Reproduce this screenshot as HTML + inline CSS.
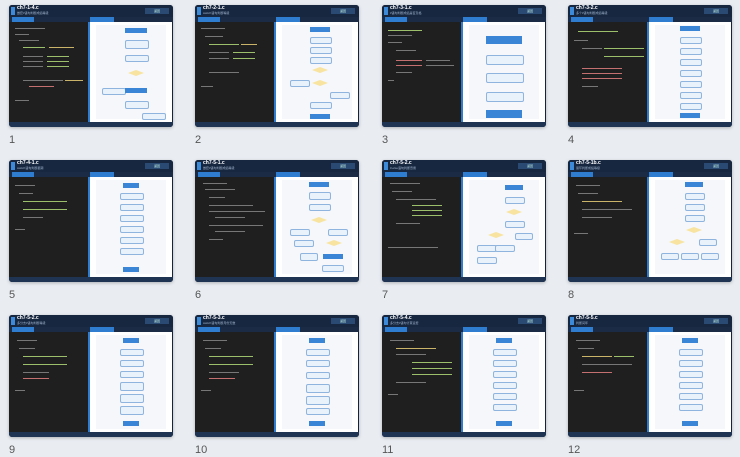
<!DOCTYPE html>
<html><head><meta charset="utf-8"><style>
body{margin:0;width:740px;height:457px;background:#e9edf2;font-family:"Liberation Sans","Noto Sans CJK SC",sans-serif;overflow:hidden;position:relative}
.t{position:absolute;width:164px;height:122px;background:#16233a;border-radius:3px;overflow:hidden;box-shadow:0 1px 3px rgba(0,0,0,.25)}
.n{position:absolute;font-size:11px;color:#555}
.hd{position:absolute;left:0;top:0;width:164px;height:12px;background:#172740}
.ic{position:absolute;left:2px;top:2px;width:4px;height:8px;background:#3c8ad8}
.ti{position:absolute;left:8px;top:1px;font-size:5px;color:#fff;font-weight:bold;line-height:5px}
.su{position:absolute;left:8px;top:7px;font-size:3px;color:#9fb3cc;line-height:3px}
.bt{position:absolute;right:4px;top:3px;width:24px;height:6px;background:#2b4a73;font-size:3px;color:#cfe;text-align:center;line-height:6px}
.tb{position:absolute;left:0;top:12px;width:164px;height:5px;background:#1b2b45}
.lt{position:absolute;left:3px;top:12px;width:22px;height:5px;background:#2f7dd0}
.rt{position:absolute;left:81px;top:12px;width:24px;height:5px;background:#2f7dd0}
.cd{position:absolute;left:0;top:17px;width:79px;height:100px;background:#1f1f1f}
.rp{position:absolute;left:79px;top:17px;width:84px;height:100px;background:#2f7dd0}
.wp{position:absolute;left:2px;top:0;width:82px;height:100px;background:#fff}
.in{position:absolute;left:6px;top:3px;width:70px;height:94px;background:#f5f7fa}
.ft{position:absolute;left:0;top:117px;width:164px;height:5px;background:#1f3352}
.l{position:absolute;height:1px;background:#777}
.g{background:#9bbf6a}.y{background:#c9b46a}.r{background:#c57070}.b{background:#6a9ad0}
.bx{position:absolute;height:5px;border-radius:2px;background:#e9f1fb;border:.5px solid #8fb4dd}
.bb{position:absolute;height:5px;background:#3a85d5}
.dm{position:absolute;width:16px;height:6px;background:#f8e4a0;transform:rotate(0deg);clip-path:polygon(50% 0,100% 50%,50% 100%,0 50%)}
.ln{position:absolute;width:.6px;background:#8aa}
</style></head><body>

<!-- template repeated -->
<div class="t" style="left:9px;top:5px"><div class="hd"><div class="ic"></div><div class="ti">ch7-1-4.c</div><div class="su">嵌套if语句判断成绩等级</div><div class="bt">返回</div></div><div class="tb"></div><div class="lt"></div><div class="rt"></div>
<div class="cd"><div class="l" style="left:6px;top:6px;width:30px"></div><div class="l" style="left:6px;top:12px;width:14px"></div><div class="l" style="left:10px;top:18px;width:20px"></div><div class="l g" style="left:14px;top:25px;width:22px"></div><div class="l y" style="left:40px;top:25px;width:25px"></div><div class="l" style="left:14px;top:34px;width:20px"></div><div class="l g" style="left:38px;top:34px;width:22px"></div><div class="l" style="left:14px;top:39px;width:20px"></div><div class="l g" style="left:38px;top:39px;width:22px"></div><div class="l" style="left:14px;top:44px;width:20px"></div><div class="l g" style="left:38px;top:44px;width:22px"></div><div class="l" style="left:14px;top:58px;width:40px"></div><div class="l y" style="left:56px;top:58px;width:18px"></div><div class="l r" style="left:20px;top:64px;width:25px"></div><div class="l" style="left:6px;top:78px;width:14px"></div></div>
<div class="rp"><div class="wp"><div class="in"></div><div class="bb" style="left:35px;top:6px;width:22px"></div><div class="bx" style="left:35px;top:18px;width:22px;height:7px"></div><div class="bx" style="left:35px;top:33px;width:22px"></div><div class="dm" style="left:38px;top:48px"></div><div class="bx" style="left:12px;top:66px;width:22px"></div><div class="bb" style="left:35px;top:66px;width:22px"></div><div class="bx" style="left:35px;top:79px;width:22px;height:6px"></div><div class="bx" style="left:52px;top:91px;width:22px"></div></div></div><div class="ft"></div></div>
<div class="n" style="left:9px;top:134px">1</div>

<div class="t" style="left:195px;top:5px"><div class="hd"><div class="ic"></div><div class="ti">ch7-2-1.c</div><div class="su">switch语句判断等级</div><div class="bt">返回</div></div><div class="tb"></div><div class="lt"></div><div class="rt"></div>
<div class="cd"><div class="l" style="left:6px;top:6px;width:24px"></div><div class="l" style="left:10px;top:14px;width:18px"></div><div class="l g" style="left:14px;top:22px;width:30px"></div><div class="l y" style="left:46px;top:22px;width:16px"></div><div class="l" style="left:14px;top:30px;width:20px"></div><div class="l g" style="left:38px;top:30px;width:22px"></div><div class="l" style="left:14px;top:36px;width:20px"></div><div class="l g" style="left:38px;top:36px;width:22px"></div><div class="l" style="left:14px;top:50px;width:30px"></div><div class="l" style="left:6px;top:64px;width:12px"></div></div>
<div class="rp"><div class="wp"><div class="in"></div><div class="bb" style="left:34px;top:5px;width:20px"></div><div class="bx" style="left:34px;top:15px;width:20px"></div><div class="bx" style="left:34px;top:25px;width:20px"></div><div class="bx" style="left:34px;top:35px;width:20px"></div><div class="dm" style="left:36px;top:45px"></div><div class="bx" style="left:14px;top:58px;width:18px"></div><div class="dm" style="left:36px;top:58px"></div><div class="bx" style="left:54px;top:70px;width:18px"></div><div class="bx" style="left:34px;top:80px;width:20px"></div><div class="bb" style="left:34px;top:92px;width:20px"></div></div></div><div class="ft"></div></div>
<div class="n" style="left:195px;top:134px">2</div>

<div class="t" style="left:382px;top:5px"><div class="hd"><div class="ic"></div><div class="ti">ch7-3-1.c</div><div class="su">if语句判断成绩是否及格</div><div class="bt">返回</div></div><div class="tb"></div><div class="lt"></div><div class="rt"></div>
<div class="cd"><div class="l g" style="left:6px;top:8px;width:34px"></div><div class="l" style="left:6px;top:13px;width:24px"></div><div class="l" style="left:6px;top:20px;width:14px"></div><div class="l" style="left:14px;top:28px;width:20px"></div><div class="l r" style="left:14px;top:38px;width:26px"></div><div class="l" style="left:44px;top:38px;width:24px"></div><div class="l r" style="left:14px;top:43px;width:26px"></div><div class="l" style="left:44px;top:43px;width:28px"></div><div class="l" style="left:14px;top:50px;width:16px"></div><div class="l" style="left:6px;top:58px;width:6px"></div></div>
<div class="rp"><div class="wp"><div class="in"></div><div class="bb" style="left:23px;top:14px;width:36px;height:8px"></div><div class="bx" style="left:23px;top:33px;width:36px;height:8px"></div><div class="bx" style="left:23px;top:51px;width:36px;height:8px"></div><div class="bx" style="left:23px;top:70px;width:36px;height:8px"></div><div class="bb" style="left:23px;top:88px;width:36px;height:8px"></div></div></div><div class="ft"></div></div>
<div class="n" style="left:382px;top:134px">3</div>

<div class="t" style="left:568px;top:5px"><div class="hd"><div class="ic"></div><div class="ti">ch7-3-2.c</div><div class="su">多个if语句判断成绩等级</div><div class="bt">返回</div></div><div class="tb"></div><div class="lt"></div><div class="rt"></div>
<div class="cd"><div class="l g" style="left:10px;top:9px;width:40px"></div><div class="l" style="left:6px;top:18px;width:14px"></div><div class="l" style="left:14px;top:26px;width:20px"></div><div class="l g" style="left:36px;top:26px;width:40px"></div><div class="l g" style="left:36px;top:34px;width:40px"></div><div class="l r" style="left:14px;top:46px;width:40px"></div><div class="l r" style="left:14px;top:51px;width:40px"></div><div class="l r" style="left:14px;top:56px;width:40px"></div><div class="l" style="left:14px;top:64px;width:16px"></div></div>
<div class="rp"><div class="wp"><div class="in"></div><div class="bb" style="left:31px;top:4px;width:20px"></div><div class="bx" style="left:31px;top:15px;width:20px"></div><div class="bx" style="left:31px;top:26px;width:20px"></div><div class="bx" style="left:31px;top:37px;width:20px"></div><div class="bx" style="left:31px;top:48px;width:20px"></div><div class="bx" style="left:31px;top:59px;width:20px"></div><div class="bx" style="left:31px;top:70px;width:20px"></div><div class="bx" style="left:31px;top:81px;width:20px"></div><div class="bb" style="left:31px;top:91px;width:20px"></div></div></div><div class="ft"></div></div>
<div class="n" style="left:568px;top:134px">4</div>

<div class="t" style="left:9px;top:160px"><div class="hd"><div class="ic"></div><div class="ti">ch7-4-1.c</div><div class="su">switch语句判断星期</div><div class="bt">返回</div></div><div class="tb"></div><div class="lt"></div><div class="rt"></div>
<div class="cd"><div class="l" style="left:6px;top:8px;width:20px"></div><div class="l" style="left:10px;top:16px;width:14px"></div><div class="l g" style="left:14px;top:24px;width:44px"></div><div class="l g" style="left:14px;top:32px;width:44px"></div><div class="l" style="left:14px;top:40px;width:20px"></div><div class="l" style="left:6px;top:52px;width:10px"></div></div>
<div class="rp"><div class="wp"><div class="in"></div><div class="bb" style="left:33px;top:6px;width:16px"></div><div class="bx" style="left:30px;top:16px;width:22px"></div><div class="bx" style="left:30px;top:27px;width:22px"></div><div class="bx" style="left:30px;top:38px;width:22px"></div><div class="bx" style="left:30px;top:49px;width:22px"></div><div class="bx" style="left:30px;top:60px;width:22px"></div><div class="bx" style="left:30px;top:71px;width:22px"></div><div class="bb" style="left:33px;top:90px;width:16px"></div></div></div><div class="ft"></div></div>
<div class="n" style="left:9px;top:289px">5</div>

<div class="t" style="left:195px;top:160px"><div class="hd"><div class="ic"></div><div class="ti">ch7-5-1.c</div><div class="su">嵌套if语句判断成绩等级</div><div class="bt">返回</div></div><div class="tb"></div><div class="lt"></div><div class="rt"></div>
<div class="cd"><div class="l" style="left:8px;top:6px;width:24px"></div><div class="l" style="left:10px;top:12px;width:30px"></div><div class="l" style="left:14px;top:20px;width:16px"></div><div class="l" style="left:14px;top:28px;width:44px"></div><div class="l" style="left:14px;top:34px;width:56px"></div><div class="l" style="left:20px;top:40px;width:30px"></div><div class="l" style="left:14px;top:48px;width:54px"></div><div class="l" style="left:20px;top:54px;width:30px"></div><div class="l" style="left:14px;top:62px;width:14px"></div></div>
<div class="rp"><div class="wp"><div class="in"></div><div class="bb" style="left:33px;top:5px;width:20px"></div><div class="bx" style="left:33px;top:15px;width:20px;height:6px"></div><div class="bx" style="left:33px;top:27px;width:20px"></div><div class="dm" style="left:35px;top:40px"></div><div class="bx" style="left:14px;top:52px;width:18px"></div><div class="bx" style="left:52px;top:52px;width:18px"></div><div class="bx" style="left:18px;top:63px;width:18px"></div><div class="dm" style="left:50px;top:63px"></div><div class="bx" style="left:24px;top:76px;width:16px;height:6px"></div><div class="bb" style="left:47px;top:77px;width:20px"></div><div class="bx" style="left:46px;top:88px;width:20px"></div></div></div><div class="ft"></div></div>
<div class="n" style="left:195px;top:289px">6</div>

<div class="t" style="left:382px;top:160px"><div class="hd"><div class="ic"></div><div class="ti">ch7-5-2.c</div><div class="su">if-else语句判断奇偶</div><div class="bt">返回</div></div><div class="tb"></div><div class="lt"></div><div class="rt"></div>
<div class="cd"><div class="l" style="left:8px;top:6px;width:30px"></div><div class="l" style="left:10px;top:14px;width:20px"></div><div class="l" style="left:14px;top:22px;width:40px"></div><div class="l g" style="left:30px;top:28px;width:30px"></div><div class="l g" style="left:30px;top:33px;width:30px"></div><div class="l g" style="left:30px;top:38px;width:30px"></div><div class="l" style="left:14px;top:46px;width:24px"></div><div class="l" style="left:6px;top:70px;width:50px"></div></div>
<div class="rp"><div class="wp"><div class="in"></div><div class="bb" style="left:42px;top:8px;width:18px"></div><div class="bx" style="left:42px;top:20px;width:18px"></div><div class="dm" style="left:43px;top:32px"></div><div class="bx" style="left:42px;top:44px;width:18px"></div><div class="dm" style="left:25px;top:55px"></div><div class="bx" style="left:52px;top:56px;width:16px"></div><div class="bx" style="left:14px;top:68px;width:18px"></div><div class="bx" style="left:32px;top:68px;width:18px"></div><div class="bx" style="left:14px;top:80px;width:18px"></div></div></div><div class="ft"></div></div>
<div class="n" style="left:382px;top:289px">7</div>

<div class="t" style="left:568px;top:160px"><div class="hd"><div class="ic"></div><div class="ti">ch7-5-1b.c</div><div class="su">循环判断成绩等级</div><div class="bt">返回</div></div><div class="tb"></div><div class="lt"></div><div class="rt"></div>
<div class="cd"><div class="l" style="left:8px;top:8px;width:24px"></div><div class="l" style="left:10px;top:16px;width:20px"></div><div class="l y" style="left:14px;top:24px;width:40px"></div><div class="l" style="left:14px;top:32px;width:50px"></div><div class="l" style="left:14px;top:40px;width:30px"></div><div class="l" style="left:6px;top:56px;width:14px"></div></div>
<div class="rp"><div class="wp"><div class="in"></div><div class="bb" style="left:36px;top:5px;width:18px"></div><div class="bx" style="left:36px;top:16px;width:18px"></div><div class="bx" style="left:36px;top:27px;width:18px"></div><div class="bx" style="left:36px;top:38px;width:18px"></div><div class="dm" style="left:37px;top:50px"></div><div class="dm" style="left:20px;top:62px"></div><div class="bx" style="left:50px;top:62px;width:16px"></div><div class="bx" style="left:12px;top:76px;width:16px"></div><div class="bx" style="left:32px;top:76px;width:16px"></div><div class="bx" style="left:52px;top:76px;width:16px"></div></div></div><div class="ft"></div></div>
<div class="n" style="left:568px;top:289px">8</div>

<div class="t" style="left:9px;top:315px"><div class="hd"><div class="ic"></div><div class="ti">ch7-5-2.c</div><div class="su">多分支if语句判断等级</div><div class="bt">返回</div></div><div class="tb"></div><div class="lt"></div><div class="rt"></div>
<div class="cd"><div class="l" style="left:8px;top:8px;width:20px"></div><div class="l" style="left:10px;top:16px;width:16px"></div><div class="l g" style="left:14px;top:24px;width:44px"></div><div class="l g" style="left:14px;top:32px;width:44px"></div><div class="l" style="left:14px;top:40px;width:26px"></div><div class="l r" style="left:14px;top:46px;width:26px"></div><div class="l" style="left:6px;top:58px;width:10px"></div></div>
<div class="rp"><div class="wp"><div class="in"></div><div class="bb" style="left:33px;top:6px;width:16px"></div><div class="bx" style="left:30px;top:17px;width:22px"></div><div class="bx" style="left:30px;top:28px;width:22px"></div><div class="bx" style="left:30px;top:39px;width:22px"></div><div class="bx" style="left:30px;top:50px;width:22px;height:7px"></div><div class="bx" style="left:30px;top:62px;width:22px;height:7px"></div><div class="bx" style="left:30px;top:74px;width:22px;height:7px"></div><div class="bb" style="left:33px;top:89px;width:16px"></div></div></div><div class="ft"></div></div>
<div class="n" style="left:9px;top:444px">9</div>

<div class="t" style="left:195px;top:315px"><div class="hd"><div class="ic"></div><div class="ti">ch7-5-3.c</div><div class="su">switch语句判断月份天数</div><div class="bt">返回</div></div><div class="tb"></div><div class="lt"></div><div class="rt"></div>
<div class="cd"><div class="l" style="left:8px;top:8px;width:24px"></div><div class="l" style="left:10px;top:16px;width:16px"></div><div class="l g" style="left:14px;top:24px;width:44px"></div><div class="l g" style="left:14px;top:32px;width:44px"></div><div class="l" style="left:14px;top:40px;width:30px"></div><div class="l r" style="left:14px;top:46px;width:26px"></div><div class="l" style="left:6px;top:58px;width:10px"></div></div>
<div class="rp"><div class="wp"><div class="in"></div><div class="bb" style="left:33px;top:6px;width:16px"></div><div class="bx" style="left:30px;top:17px;width:22px"></div><div class="bx" style="left:30px;top:28px;width:22px"></div><div class="bx" style="left:30px;top:40px;width:22px"></div><div class="bx" style="left:30px;top:52px;width:22px;height:7px"></div><div class="bx" style="left:30px;top:64px;width:22px;height:7px"></div><div class="bx" style="left:30px;top:76px;width:22px"></div><div class="bb" style="left:33px;top:89px;width:16px"></div></div></div><div class="ft"></div></div>
<div class="n" style="left:195px;top:444px">10</div>

<div class="t" style="left:382px;top:315px"><div class="hd"><div class="ic"></div><div class="ti">ch7-5-4.c</div><div class="su">多分支if语句计算运费</div><div class="bt">返回</div></div><div class="tb"></div><div class="lt"></div><div class="rt"></div>
<div class="cd"><div class="l" style="left:8px;top:8px;width:24px"></div><div class="l y" style="left:14px;top:16px;width:40px"></div><div class="l" style="left:14px;top:22px;width:30px"></div><div class="l g" style="left:30px;top:30px;width:40px"></div><div class="l g" style="left:30px;top:36px;width:40px"></div><div class="l g" style="left:30px;top:42px;width:40px"></div><div class="l" style="left:14px;top:50px;width:30px"></div><div class="l" style="left:6px;top:62px;width:10px"></div></div>
<div class="rp"><div class="wp"><div class="in"></div><div class="bb" style="left:33px;top:6px;width:16px"></div><div class="bx" style="left:30px;top:17px;width:22px"></div><div class="bx" style="left:30px;top:28px;width:22px"></div><div class="bx" style="left:30px;top:39px;width:22px"></div><div class="bx" style="left:30px;top:50px;width:22px"></div><div class="bx" style="left:30px;top:61px;width:22px"></div><div class="bx" style="left:30px;top:72px;width:22px"></div><div class="bb" style="left:33px;top:89px;width:16px"></div></div></div><div class="ft"></div></div>
<div class="n" style="left:382px;top:444px">11</div>

<div class="t" style="left:568px;top:315px"><div class="hd"><div class="ic"></div><div class="ti">ch7-5-5.c</div><div class="su">判断闰年</div><div class="bt">返回</div></div><div class="tb"></div><div class="lt"></div><div class="rt"></div>
<div class="cd"><div class="l" style="left:8px;top:8px;width:24px"></div><div class="l" style="left:10px;top:16px;width:16px"></div><div class="l y" style="left:14px;top:24px;width:30px"></div><div class="l g" style="left:46px;top:24px;width:20px"></div><div class="l" style="left:14px;top:32px;width:50px"></div><div class="l r" style="left:14px;top:40px;width:30px"></div><div class="l" style="left:6px;top:58px;width:10px"></div></div>
<div class="rp"><div class="wp"><div class="in"></div><div class="bb" style="left:33px;top:6px;width:16px"></div><div class="bx" style="left:30px;top:17px;width:22px"></div><div class="bx" style="left:30px;top:28px;width:22px"></div><div class="bx" style="left:30px;top:39px;width:22px"></div><div class="bx" style="left:30px;top:50px;width:22px"></div><div class="bx" style="left:30px;top:61px;width:22px"></div><div class="bx" style="left:30px;top:72px;width:22px"></div><div class="bb" style="left:33px;top:89px;width:16px"></div></div></div><div class="ft"></div></div>
<div class="n" style="left:568px;top:444px">12</div>

</body></html>
